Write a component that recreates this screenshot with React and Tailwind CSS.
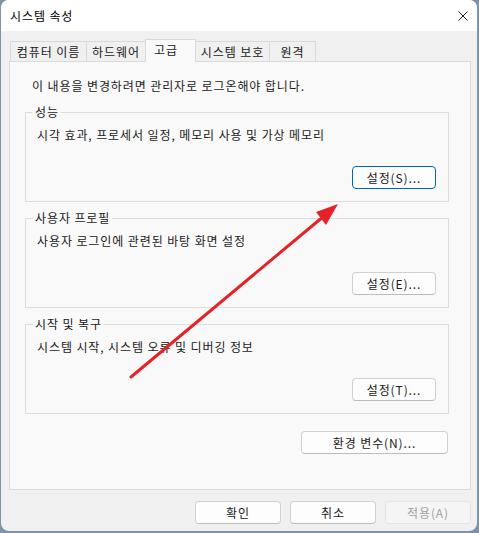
import React from 'react';

const font = { fontFamily: '"Noto Sans CJK KR", "Noto Sans", sans-serif' };

const Btn = ({ children, w = 'w-[84px]', focused = false, disabled = false }) => (
    <div
        className={`${w} h-[23px] flex items-center justify-center rounded-[4px] border text-[12px] leading-[16px]
            ${focused ? 'border-[#0067c0] bg-[#fdfdfd] text-[#1a1a1a]'
            : disabled ? 'border-[#e3e3e3] bg-[#f5f5f5] text-[#a0a0a0]'
            : 'border-[#d0d0d0] border-b-[#bcbcbc] bg-[#fdfdfd] text-[#1a1a1a]'}`}
    >
        {children}
    </div>
);

const Group = ({ title, text, button, mt = 'mt-[16px]' }) => (
    <div className={`relative ${mt} ml-[15px] w-[424px] h-[90px] border border-[#dcdcdc]`}>
        <span className="absolute -top-[9px] left-[7px] px-[2px] bg-[#f9f9f9] text-[12px] leading-[16px] text-[#1a1a1a]">{title}</span>
        <p className="pt-[14px] pl-[11px] text-[12px] leading-[16px] text-[#1a1a1a]">{text}</p>
        <div className="flex justify-end pr-[12px] mt-[23px]">{button}</div>
    </div>
);

const tabs = [
    { label: '컴퓨터 이름', w: 'w-[77px]' },
    { label: '하드웨어', w: 'w-[60px]' },
    { label: '고급', w: 'w-[51px]', active: true },
    { label: '시스템 보호', w: 'w-[75px]' },
    { label: '원격', w: 'w-[47px]' },
];

export default function App() {
    return (
        <div className="relative w-[479px] h-[533px] bg-[#7d93a9] overflow-hidden tracking-[0.9px]" style={font}>
            <div className="ml-px w-[476px] h-[531px] rounded-[8px] overflow-hidden flex flex-col bg-[#f0f0f0]">
                {/* Title bar */}
                <div className="h-[31px] shrink-0 bg-white flex items-center justify-between pl-[9px] pr-[11px]">
                    <span className="text-[12px] leading-[16px] text-black">시스템 속성</span>
                    <svg width="10" height="10" viewBox="0 0 10 10" className="mr-[-2px]">
                        <path d="M0.5 0.5 L9.5 9.5 M9.5 0.5 L0.5 9.5" stroke="#1a1a1a" strokeWidth="1" />
                    </svg>
                </div>

                {/* Tabs */}
                <div className="pt-[8px] pl-[9px] flex items-end relative z-10 -mb-px shrink-0">
                    {tabs.map((t, i) => (
                        <div
                            key={t.label}
                            className={`${t.w} ${i > 0 ? '-ml-px' : ''} flex items-center justify-center border border-[#d9d9d9] text-[12px] leading-[16px] text-[#1a1a1a] whitespace-nowrap
                                ${t.active ? 'h-[23px] bg-[#f9f9f9] border-b-[#f9f9f9] justify-start pl-[8px] pb-[2px] relative z-10' : 'h-[21px] bg-[#f0f0f0] border-b-[#d9d9d9]'}`}
                        >
                            {t.label}
                        </div>
                    ))}
                </div>

                {/* Panel */}
                <div className="ml-[8px] w-[462px] h-[429px] shrink-0 border border-[#d9d9d9] bg-[#f9f9f9]">
                    <p className="pt-[16px] pl-[22px] text-[12px] leading-[16px] text-[#1a1a1a]">이 내용을 변경하려면 관리자로 로그온해야 합니다.</p>
                    <Group mt="mt-[18px]" title="성능" text="시각 효과, 프로세서 일정, 메모리 사용 및 가상 메모리" button={<Btn focused>설정(S)...</Btn>} />
                    <Group title="사용자 프로필" text="사용자 로그인에 관련된 바탕 화면 설정" button={<Btn>설정(E)...</Btn>} />
                    <Group title="시작 및 복구" text="시스템 시작, 시스템 오류 및 디버깅 정보" button={<Btn>설정(T)...</Btn>} />
                    <div className="flex justify-end pr-[22px] mt-[17px]">
                        <Btn w="w-[147px]">환경 변수(N)...</Btn>
                    </div>
                </div>

                {/* Footer buttons */}
                <div className="flex justify-end gap-[9px] pr-[6px] mt-[11px]">
                    <Btn w="w-[86px]">확인</Btn>
                    <Btn w="w-[86px]">취소</Btn>
                    <Btn w="w-[86px]" disabled>적용(A)</Btn>
                </div>
            </div>

            {/* Red annotation arrow */}
            <svg className="absolute left-0 top-0 pointer-events-none" width="479" height="533" viewBox="0 0 479 533">
                <line x1="131" y1="377" x2="324" y2="216" stroke="#e52228" strokeWidth="3" strokeLinecap="round" />
                <polygon points="338,204 326,225 316,212" fill="#e52228" />
            </svg>
        </div>
    );
}
